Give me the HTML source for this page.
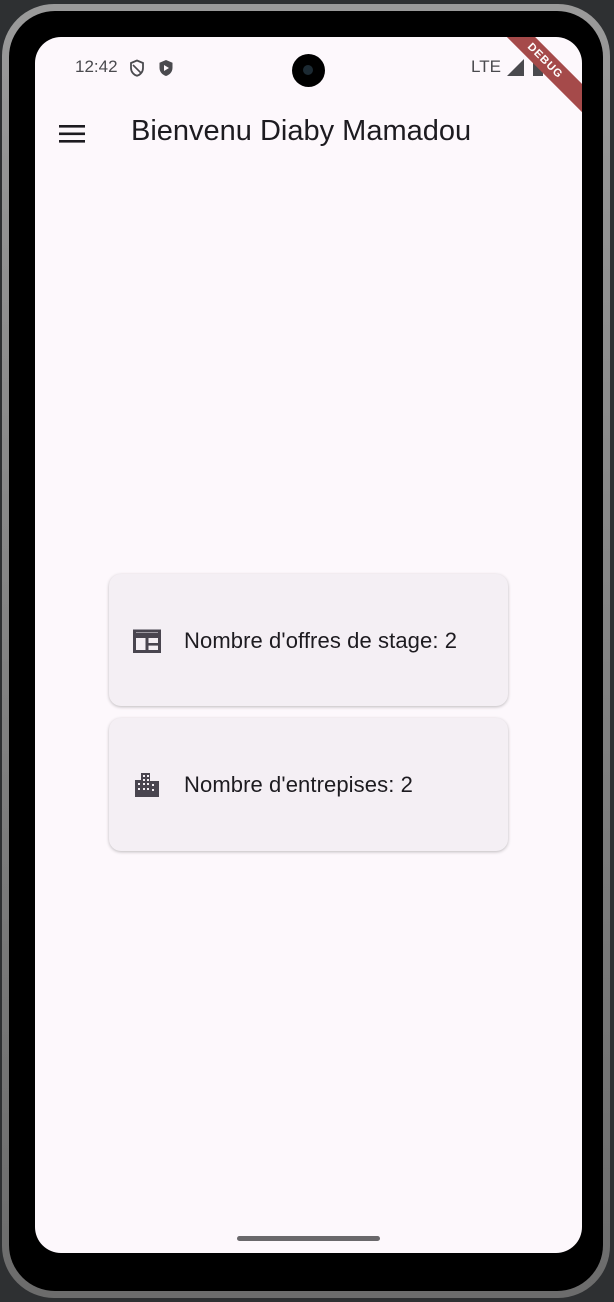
<!DOCTYPE html>
<html><head><meta charset="utf-8"><style>
html,body{margin:0;padding:0;}
body{width:614px;height:1302px;background:#2e3032;position:relative;overflow:hidden;font-family:"Liberation Sans",Roboto,sans-serif;}
.ring{position:absolute;left:2px;top:4px;width:608px;height:1294px;border-radius:52px;background:linear-gradient(#9a9a9a,#6c6c6c);}
.bezel{position:absolute;left:9px;top:11px;width:594px;height:1280px;border-radius:46px;background:#000;}
.screen{position:absolute;left:35px;top:37px;width:547px;height:1216px;border-radius:26px;background:#fdf8fc;overflow:hidden;}
.sb{position:absolute;top:20px;font-size:17px;color:#4a4a4e;}
.cam{position:absolute;left:257px;top:17px;width:33px;height:33px;border-radius:50%;background:#000;}
.cam:after{content:"";position:absolute;left:11px;top:11px;width:10px;height:10px;border-radius:50%;background:#1c2a33;}
.title{position:absolute;left:96px;top:78px;font-size:29px;color:#1d1b20;}
.card{position:absolute;left:74px;width:399px;border-radius:12px;background:#f4eff4;box-shadow:0 1px 3px rgba(0,0,0,.25);}
.card .t{position:absolute;left:75px;font-size:22px;color:#1d1b20;letter-spacing:.1px;}
.ribbon{position:absolute;right:-38px;top:14px;width:150px;height:20px;background:#a54a4a;transform:rotate(45deg);color:#fff;font-size:11px;font-weight:bold;text-align:center;line-height:20px;letter-spacing:1px;}
.bar{position:absolute;left:202px;bottom:12px;width:143px;height:5px;border-radius:3px;background:#6a686b;}
</style></head><body>
<div class="ring"></div>
<div class="bezel"></div>
<div class="screen">
  <div class="sb" style="left:40px;">12:42</div>
  <svg style="position:absolute;left:94px;top:22px" width="16" height="18" viewBox="0 0 16 18"><path d="M8 1.5L2 4v5c0 3.8 2.6 6.8 6 7.8 3.4-1 6-4 6-7.8V4z" fill="none" stroke="#4a4a4e" stroke-width="1.8"/><path d="M4 6l8 8" stroke="#4a4a4e" stroke-width="1.6"/></svg>
  <svg style="position:absolute;left:123px;top:22px" width="16" height="18" viewBox="0 0 16 18"><path d="M8 1L1.5 3.8v5c0 4 2.8 7.2 6.5 8.2 3.7-1 6.5-4.2 6.5-8.2v-5z" fill="#4a4a4e"/><path d="M6 6v6l5-3z" fill="#fdf8fc"/></svg>
  <div class="cam"></div>
  <div class="sb" style="left:436px;">LTE</div>
  <svg style="position:absolute;left:472px;top:22px" width="17" height="17"><path d="M0 17L17 0v17z" fill="#4a4a4e"/></svg>
  <div style="position:absolute;left:498px;top:22px;width:10px;height:17px;background:#4a4a4e;"></div>
  <div class="ribbon">DEBUG</div>
  <svg style="position:absolute;left:24px;top:87px" width="26" height="20"><rect y="1" width="26" height="2.6" fill="#1d1b20"/><rect y="8.5" width="26" height="2.6" fill="#1d1b20"/><rect y="16" width="26" height="2.6" fill="#1d1b20"/></svg>
  <div class="title">Bienvenu Diaby Mamadou</div>
  <div class="card" style="top:537px;height:132px;">
    <svg style="position:absolute;left:24px;top:55px" width="28" height="24" viewBox="0 0 28 24"><path d="M1.5 2h25v20.5h-25z" fill="none" stroke="#49454f" stroke-width="3"/><path d="M2 1v2M5 1v2M8 1v2M11 1v2M14 1v2M17 1v2M20 1v2M23 1v2M26 1v2" stroke="#49454f" stroke-width="1.4"/><rect x="1" y="4" width="26" height="5" fill="#49454f"/><rect x="12.5" y="8" width="3" height="15" fill="#49454f"/><rect x="15" y="14" width="12" height="2.6" fill="#49454f"/></svg>
    <div class="t" style="top:54px;">Nombre d'offres de stage: 2</div>
  </div>
  <div class="card" style="top:681px;height:133px;">
    <svg style="position:absolute;left:26px;top:55px" width="24" height="24" viewBox="0 0 24 24"><path d="M6 0h9v8h9v16H0V7h6z" fill="#49454f"/><g fill="#f4eff4"><rect x="8" y="2" width="2" height="2"/><rect x="12" y="2" width="2" height="2"/><rect x="8" y="6" width="2" height="2"/><rect x="12" y="6" width="2" height="2"/><rect x="3" y="10" width="2" height="2"/><rect x="8" y="10" width="2" height="2"/><rect x="12" y="10" width="2" height="2"/><rect x="17" y="11" width="2" height="2"/><rect x="3" y="15" width="2" height="2"/><rect x="8" y="15" width="2" height="2"/><rect x="12" y="15" width="2" height="2"/><rect x="17" y="16" width="2" height="2"/></g></svg>
    <div class="t" style="top:54px;">Nombre d'entrepises: 2</div>
  </div>
  <div class="bar"></div>
</div>
</body></html>
